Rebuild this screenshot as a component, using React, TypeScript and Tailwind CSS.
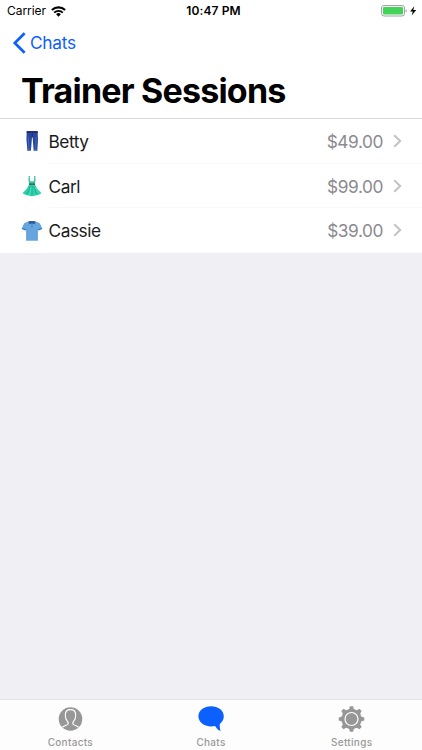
import type { ReactNode } from 'react';

type Session = {
  name: string;
  price: string;
  icon: ReactNode;
};

const sessions: Session[] = [
  { name: 'Betty', price: '$49.00', icon: <JeansIcon /> },
  { name: 'Carl', price: '$99.00', icon: <DressIcon /> },
  { name: 'Cassie', price: '$39.00', icon: <ShirtIcon /> },
];

const tabs = [
  { name: 'Contacts', icon: ContactIcon },
  { name: 'Chats', icon: ChatIcon },
  { name: 'Settings', icon: GearIcon },
];

export default function App() {
  return (
    <div className="flex h-[750px] w-[422px] flex-col overflow-hidden bg-[#efeff4] font-['Inter','Liberation_Sans',sans-serif] text-black">
      <header className="border-b border-[#d9d9db] bg-white">
        <StatusBar />

        {/* Back button */}
        <button className="flex h-[42px] items-center pl-3 text-[#0b60fe]">
          <svg className="h-[22px] w-[15px]" viewBox="0 0 15 22" fill="none" stroke="currentColor" strokeWidth="2.7">
            <path d="M12.6 1.2 L2.8 11 L12.6 20.8" />
          </svg>
          <span className="ml-[3px] text-[17.3px] leading-[22px] tracking-[-0.28px]">Chats</span>
        </button>

        <h1 className="h-[54px] pl-[21px] pt-[6px] text-[34px] font-bold leading-[42px] tracking-[-0.8px] whitespace-nowrap">
          Trainer Sessions
        </h1>
      </header>

      {/* Session list */}
      <ul className="bg-white">
        {sessions.map((session) => (
          <li
            key={session.name}
            className="flex h-[44.7px] items-center pl-[21px] pr-5"
          >
            {session.icon}
            <div className="ml-[5px] -mr-5 flex h-full flex-1 items-center border-b border-[#f8f8f9] pr-5">
              <span className="flex-1 pl-[0.5px] pt-[2px] text-[17.3px] tracking-[-0.45px] text-[#1a1a1c]">{session.name}</span>
              <span className="pt-[2px] text-[17.3px] tracking-[-0.42px] text-[#8a8a8f]">{session.price}</span>
              <svg className="ml-[10px] h-[14px] w-[9px]" viewBox="0 0 9 14" fill="none" stroke="#c2c2c7" strokeWidth="2">
                <path d="M1.2 1.2 L7.2 7 L1.2 12.8" />
              </svg>
            </div>
          </li>
        ))}
      </ul>

      {/* Tab bar */}
      <nav className="mt-auto flex h-[51px] border-t border-[#e2e2e5] bg-[#fdfdfd]">
        {tabs.map((tab) => (
          <button key={tab.name} className="flex flex-1 flex-col items-center pt-[5px]">
            <tab.icon />
            <span className="mt-[2px] text-[10px] font-medium leading-3 tracking-[0.3px] text-[#999]">
              {tab.name}
            </span>
          </button>
        ))}
      </nav>
    </div>
  );
}

function StatusBar() {
  return (
    <div className="grid h-[22px] grid-cols-3 items-center pl-[7px] pr-[5px] text-[12px] leading-[22px]">
      <div className="flex items-center gap-[5px]">
        <span className="tracking-[-0.05px]">Carrier</span>
        <svg className="h-[11px] w-[15px]" viewBox="0 0 15 11">
          <path d="M0.9 4.1 A9.3 9.3 0 0 1 14.1 4.1" fill="none" stroke="#000" strokeWidth="2.1" />
          <path d="M3.2 6.6 A6 6 0 0 1 11.8 6.6" fill="none" stroke="#000" strokeWidth="1.8" />
          <path d="M7.5 10.8 L5.1 8.3 A3.4 3.4 0 0 1 9.9 8.3 Z" fill="#000" />
        </svg>
      </div>
      <span className="pl-[3px] text-center font-semibold tracking-[0.1px]">10:47 PM</span>
      <div className="flex items-center justify-end">
        <svg className="h-[12px] w-[37px]" viewBox="0 0 37 12">
          <rect x="1.5" y="0.5" width="23" height="10.5" rx="2.5" fill="#fff" stroke="#a3a3a3" />
          <rect x="3" y="2" width="20" height="7.5" rx="1" fill="#43d358" />
          <path d="M25.6 4 Q26.9 4.4 26.9 5.8 Q26.9 7.2 25.6 7.6 Z" fill="#aaa" />
          <path d="M34.2 1.2 L30.1 6.4 H32.8 L31.7 10.6 L36.2 5.1 H33.3 Z" fill="#000" />
        </svg>
      </div>
    </div>
  );
}

function JeansIcon() {
  return (
    <svg className="h-[22px] w-[22px]" viewBox="0 0 22 22">
      <path d="M5.8 1 H16.6 L17 9 L16.3 21 H12.7 L11.6 7.5 H11 L9.9 21 H6.4 L5.4 9 Z" fill="#2a459c" />
      <path d="M7.2 7 L8 20 M15.1 7 L14.6 20" stroke="#4468b8" strokeWidth="1" />
      <path d="M5.7 1.2 H16.7 L16.8 3 H5.6 Z" fill="#1a2d76" />
      <path d="M6.3 20.3 H9.9 M12.7 20.3 H16.3" stroke="#7f95cc" strokeWidth="0.9" />
      <path d="M11.2 3 V7" stroke="#172765" strokeWidth="0.8" />
    </svg>
  );
}

function DressIcon() {
  return (
    <svg className="h-[22px] w-[22px]" viewBox="0 0 22 22">
      <path d="M8.2 1 V6 M13.8 1 V6" stroke="#37b99d" strokeWidth="1.2" />
      <path d="M7.6 4.2 Q9.5 6.6 11 6.4 Q12.5 6.6 14.4 4.2 L14 9 H8 Z" fill="#2cc9a5" />
      <path d="M8 9.8 H14 Q16 14.8 20.5 18.3 Q16.6 21.2 11 21.2 Q5.4 21.2 1.5 18.3 Q6 14.8 8 9.8 Z" fill="#2bcfa9" />
      <path d="M9.4 11 L6 19.6 M11 11 V20.6 M12.6 11 L16 19.6" stroke="#17a88b" strokeWidth="0.7" />
      <path d="M10.2 12 L8.6 20 M13.8 12 L18 18" stroke="#62e7c8" strokeWidth="0.7" />
      <rect x="7.9" y="8.4" width="6.2" height="1.6" fill="#48645f" />
    </svg>
  );
}

function ShirtIcon() {
  return (
    <svg className="h-[22px] w-[22px]" viewBox="0 0 22 22">
      <path d="M7.4 1.5 L3.5 3 Q1.7 5.4 0.8 9 L4.9 10.4 L5.6 8.8 V20.8 H16.4 V8.8 L17.1 10.4 L21.2 9 Q20.3 5.4 18.5 3 L14.6 1.5 Z" fill="#66a6e0" />
      <path d="M0.9 8.5 L5 9.8 M21.1 8.5 L17 9.8" stroke="#3b6cab" strokeWidth="1" />
      <path d="M7.3 1.3 Q11 0.7 14.7 1.3 L13.6 4.2 L11 3.4 L8.4 4.2 Z" fill="#2d5c9e" />
      <path d="M11 4 V8" stroke="#4a82c1" strokeWidth="1" />
      <path d="M5.7 9 V20.6 M16.3 9 V20.6" stroke="#4787c5" strokeWidth="0.7" />
    </svg>
  );
}

function ContactIcon() {
  return (
    <svg className="h-[29px] w-[29px]" viewBox="0 0 29 29">
      <circle cx="14.5" cy="14" r="11.8" fill="#979797" />
      <path
        d="M6.4 22.4 C7.7 20.9 10.5 20.5 11.8 19.4 C12.8 18.5 12 17.1 11.1 15.9 C10 14.7 9.3 12.4 9.3 10 C9.3 6.6 11.5 4.6 14.5 4.6 C17.5 4.6 19.7 6.6 19.7 10 C19.7 12.4 19 14.7 17.9 15.9 C17 17.1 16.2 18.5 17.2 19.4 C18.5 20.5 21.3 20.9 22.6 22.4"
        fill="none"
        stroke="#fff"
        strokeWidth="1.1"
      />
    </svg>
  );
}

function ChatIcon() {
  return (
    <svg className="h-[29px] w-[29px]" viewBox="0 0 29 29">
      <path
        d="M14.1 1.3 C7 1.3 1.4 5.6 1.4 11.3 C1.4 17 7 21.4 14.1 21.4 C15.6 21.4 16.9 21.2 18.1 20.9 C19.3 23 21.2 24.9 23.5 26 C22.9 23.6 22.6 21 22.8 18.9 C25.4 17 26.8 14.3 26.8 11.3 C26.8 5.6 21.2 1.3 14.1 1.3 Z"
        fill="#0b60fe"
      />
    </svg>
  );
}

function GearIcon() {
  const teeth = [0, 45, 90, 135, 180, 225, 270, 315];

  return (
    <svg className="h-[29px] w-[29px]" viewBox="0 0 29 29">
      {teeth.map((angle) => (
        <path key={angle} d="M10.3 5.2 L12.2 4 L12.9 1.2 H16.1 L16.8 4 L18.7 5.2 Z" fill="#979797" transform={`rotate(${angle} 14.5 14)`} />
      ))}
      <circle cx="14.5" cy="14" r="10" fill="#979797" />
      <circle cx="14.5" cy="14" r="6.5" fill="none" stroke="#fff" strokeWidth="1.2" />
    </svg>
  );
}
